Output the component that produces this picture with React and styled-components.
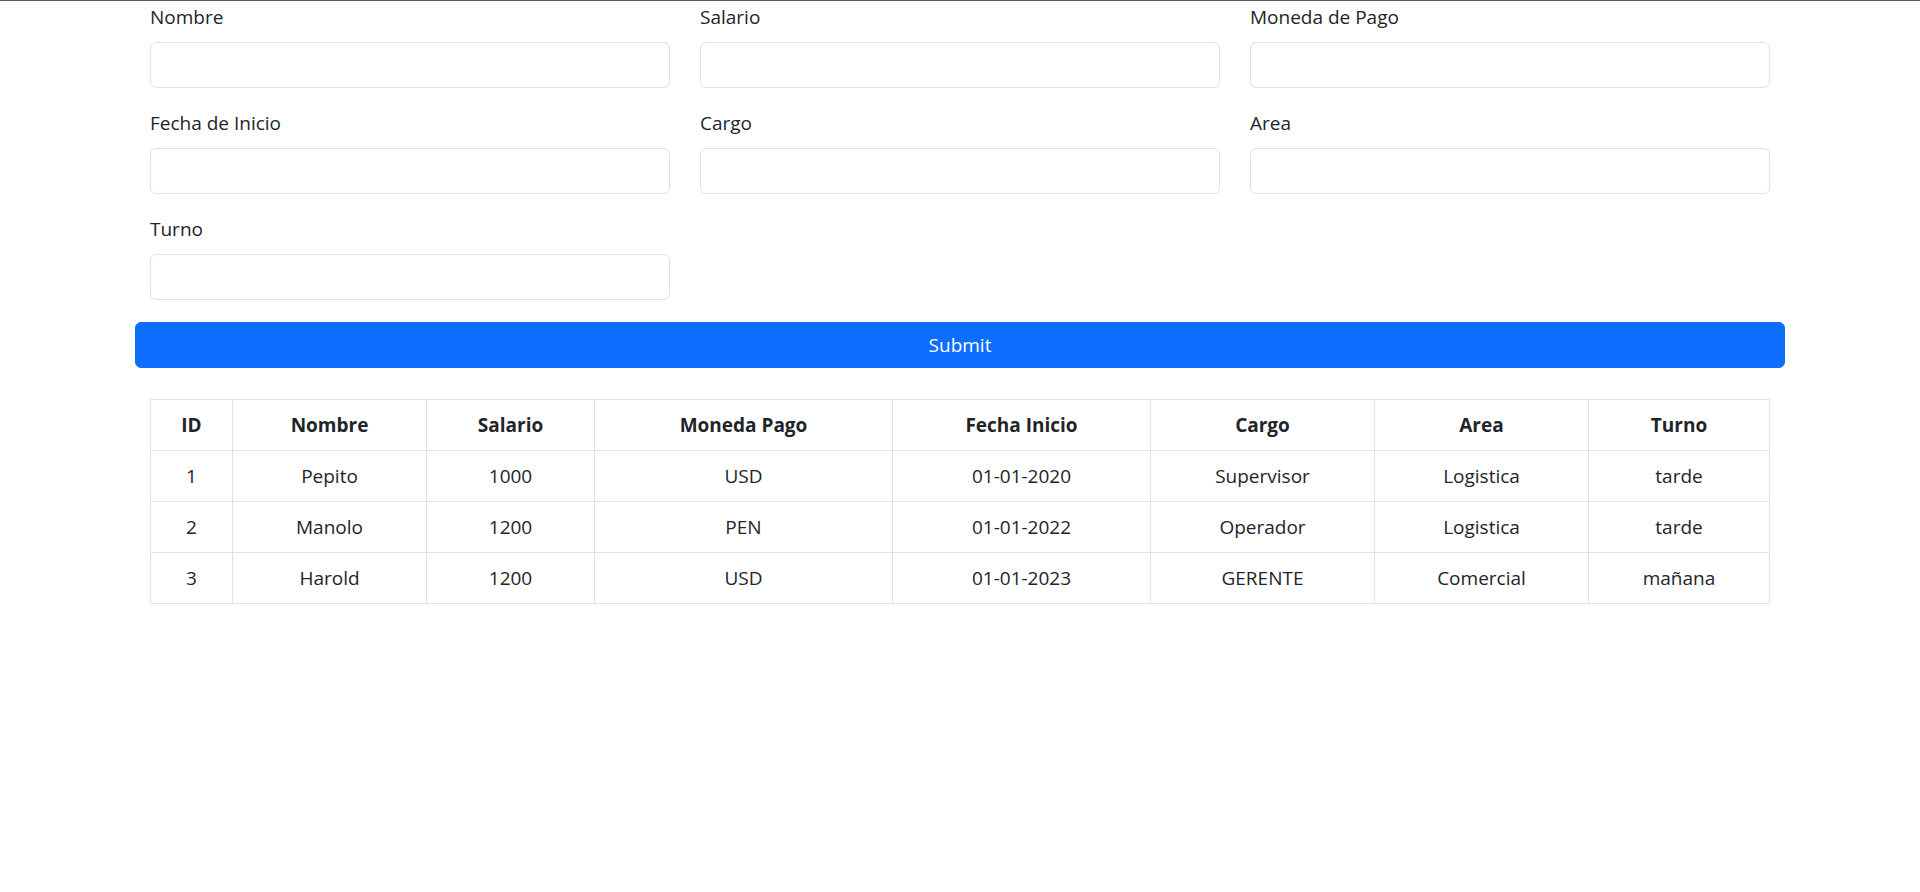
import styled, { createGlobalStyle } from "styled-components";

const GlobalStyle = createGlobalStyle`
  * {
    box-sizing: border-box;
  }

  body {
    margin: 0;
    border-top: 1px solid #5a5a5a;
    background: #fff;
    color: #212529;
    font-family: "Open Sans", "Noto Sans", sans-serif;
    font-size: 19px;
    line-height: 30px;
  }
`;

const fields = [
  "Nombre",
  "Salario",
  "Moneda de Pago",
  "Fecha de Inicio",
  "Cargo",
  "Area",
  "Turno",
];

const columns = [
  { title: "ID", width: 82 },
  { title: "Nombre", width: 194 },
  { title: "Salario", width: 168 },
  { title: "Moneda Pago", width: 298 },
  { title: "Fecha Inicio", width: 258 },
  { title: "Cargo", width: 224 },
  { title: "Area", width: 214 },
  { title: "Turno", width: 181 },
];

const empleados = [
  ["1", "Pepito", "1000", "USD", "01-01-2020", "Supervisor", "Logistica", "tarde"],
  ["2", "Manolo", "1200", "PEN", "01-01-2022", "Operador", "Logistica", "tarde"],
  ["3", "Harold", "1200", "USD", "01-01-2023", "GERENTE", "Comercial", "mañana"],
];

function App() {
  return (
    <>
      <GlobalStyle />
      <Container>
        <FormGrid>
          {fields.map((f) => (
            <Field key={f}>
              <Label>{f}</Label>
              <Input type="text" />
            </Field>
          ))}
        </FormGrid>
        <SubmitButton type="submit">Submit</SubmitButton>
        <TableWrap>
          <Table>
            <colgroup>
              {columns.map((c) => (
                <col key={c.title} style={{ width: c.width }} />
              ))}
            </colgroup>
            <thead>
              <tr>
                {columns.map((c) => (
                  <Th key={c.title}>{c.title}</Th>
                ))}
              </tr>
            </thead>
            <tbody>
              {empleados.map((row) => (
                <tr key={row[0]}>
                  {row.map((v, i) => (
                    <Td key={i}>{v}</Td>
                  ))}
                </tr>
              ))}
            </tbody>
          </Table>
        </TableWrap>
      </Container>
    </>
  );
}

export default App;

const Container = styled.div`
  width: 1650px;
  margin: 0 auto;
  padding-top: 1px;
`;

const FormGrid = styled.div`
  display: grid;
  grid-template-columns: repeat(3, 1fr);
`;

const Field = styled.div`
  padding: 0 15px;
  margin-bottom: 20px;
`;

const Label = styled.label`
  display: block;
  margin-bottom: 10px;
`;

const Input = styled.input`
  display: block;
  width: 100%;
  height: 46px;
  padding: 7px 15px;
  font: inherit;
  color: #212529;
  background: #fff;
  border: 1px solid #dee2e6;
  border-radius: 6px;
`;

const SubmitButton = styled.button`
  display: block;
  width: 100%;
  height: 46px;
  margin: 2px 0 0;
  border: 1px solid #0d6efd;
  border-radius: 6px;
  background: #0d6efd;
  color: #fff;
  font: inherit;
  cursor: pointer;
`;

const TableWrap = styled.div`
  padding: 0 15px;
  margin-top: 31px;
`;

const Table = styled.table`
  width: 100%;
  table-layout: fixed;
  border-collapse: collapse;
`;

const Th = styled.th`
  padding: 10px;
  border: 1px solid #dee2e6;
  font-weight: 700;
  text-align: center;
`;

const Td = styled.td`
  padding: 10px;
  border: 1px solid #dee2e6;
  text-align: center;
`;
